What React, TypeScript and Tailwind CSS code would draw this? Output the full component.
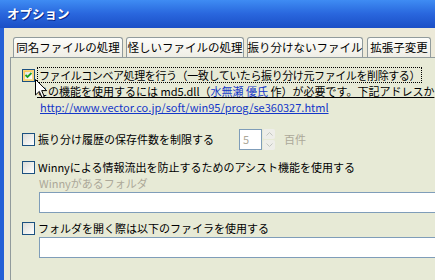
import React from "react";

const font = { fontFamily: "'Noto Sans CJK JP', 'Noto Sans', sans-serif" };

function CheckBox({ checked }: { checked?: boolean }) {
  if (checked) {
    return (
      <div className="w-[13px] h-[13px] shrink-0 border border-[#1C5180] bg-[#F9D57A] p-[1px]">
        <div className="w-full h-full bg-gradient-to-br from-[#F7C44F] to-[#FBE3A0] p-[1px]">
          <div className="w-full h-full bg-gradient-to-br from-[#E4E4DE] to-white flex items-center justify-center">
            <svg width="7" height="7" viewBox="0 0 7 7">
              <path d="M0.5 3 L2.5 5 L6.5 1" stroke="#21A121" strokeWidth="1.8" fill="none" />
            </svg>
          </div>
        </div>
      </div>
    );
  }
  return (
    <div className="w-[13px] h-[13px] shrink-0 border border-[#1C5180] bg-gradient-to-br from-[#DCDCD7] to-white" />
  );
}

function Tab({ label, w }: { label: string; w: string }) {
  return (
    <div
      className={`${w} h-[20px] border border-b-0 border-[#919B9C] rounded-t-[3px] bg-gradient-to-b from-[#FDFDFA] to-[#EFEEE6] flex items-center justify-center text-[11.5px] text-black whitespace-nowrap`}
    >
      {label}
    </div>
  );
}

export default function App() {
  return (
    <div className="w-[435px] h-[280px] overflow-hidden flex flex-col bg-[#ECE9D8] text-black" style={font}>
      {/* title bar */}
      <div className="h-[28px] shrink-0 bg-gradient-to-b from-[#3F8CF3] via-[#2966DD] to-[#1B4FC6] flex items-center pl-[7px]">
        <span className="text-white font-bold text-[12.5px] leading-none [text-shadow:1px_1px_0_#0A2A8A]">オプション</span>
      </div>
      {/* body */}
      <div className="flex-1 flex border-l-[4px] border-[#2761D6] min-h-0">
        <div className="flex-1 flex flex-col pl-[6px] pt-[9px] min-w-0">
          {/* tabs */}
          <div className="flex pl-[3px] h-[20px] shrink-0">
            <Tab label="同名ファイルの処理" w="w-[110px]" />
            <div className="w-[3px]" />
            <Tab label="怪しいファイルの処理" w="w-[118px]" />
            <div className="w-[3px]" />
            <Tab label="振り分けないファイル" w="w-[116px]" />
            <div className="w-[4px]" />
            <Tab label="拡張子変更" w="w-[64px]" />
          </div>
          {/* panel */}
          <div className="flex-1 relative border-l border-t border-[#919B9C] bg-[#E7EAD6] text-[11px] overflow-hidden min-w-0">
            <div className="flex flex-col">
              {/* row 1 */}
              <div className="mt-[9px] h-[16px] flex items-center pl-[11px]">
                <CheckBox checked />
                <div className="ml-[2px] h-[16px] border border-dotted border-black px-[1px] flex items-center whitespace-nowrap tracking-[-0.4px]">
                  ファイルコンベア処理を行う（一致していたら振り分け元ファイルを削除する）
                </div>
              </div>
              <div className="h-[16px] leading-[16px] pl-[26px] whitespace-nowrap underline">
                この機能を使用するには md5.dll（<span className="text-[#1437C8]">水無瀬 優氏</span> 作）が必要です。下記アドレスか
              </div>
              <div className="h-[16px] flex items-center pl-[29px] whitespace-nowrap">
                <span className="text-[#1437C8] underline">http://www.vector.co.jp/soft/win95/prog/se360327.html</span>
              </div>
              {/* row 2 */}
              <div className="mt-[14px] h-[21px] flex items-center pl-[11px]">
                <CheckBox />
                <span className="ml-[3px] w-[201px] whitespace-nowrap">振り分け履歴の保存件数を制限する</span>
                <div className="w-[23px] h-[21px] border border-[#7F9DB9] bg-white flex items-center pl-[3px] text-[#ACA899]">5</div>
                <div className="w-[12px] h-[21px] ml-[1px] flex flex-col gap-[1px]">
                  <div className="flex-1 bg-[#EEEEE9] rounded-[2px] flex items-center justify-center">
                    <svg width="7" height="4" viewBox="0 0 7 4"><path d="M0.5 3.5 L3.5 0.5 L6.5 3.5" stroke="#C3C6C0" fill="none" /></svg>
                  </div>
                  <div className="flex-1 bg-[#EEEEE9] rounded-[2px] flex items-center justify-center">
                    <svg width="7" height="4" viewBox="0 0 7 4"><path d="M0.5 0.5 L3.5 3.5 L6.5 0.5" stroke="#C3C6C0" fill="none" /></svg>
                  </div>
                </div>
                <span className="ml-[9px] text-[#ACA899]">百件</span>
              </div>
              {/* row 3 */}
              <div className="mt-[9px] h-[16px] flex items-center pl-[11px]">
                <CheckBox />
                <span className="ml-[3px] whitespace-nowrap">Winnyによる情報流出を防止するためのアシスト機能を使用する</span>
              </div>
              <div className="h-[16px] flex items-center pl-[28px] text-[#ACA899] whitespace-nowrap">Winnyがあるフォルダ</div>
              <div className="mt-[1px] ml-[28px] h-[21px] border border-[#7F9DB9] bg-white w-[420px]" />
              {/* row 4 */}
              <div className="mt-[7px] h-[16px] flex items-center pl-[11px]">
                <CheckBox />
                <span className="ml-[3px] whitespace-nowrap">フォルダを開く際は以下のファイラを使用する</span>
              </div>
              <div className="mt-[1px] ml-[28px] h-[21px] border border-[#7F9DB9] bg-white w-[420px]" />
            </div>
            {/* mouse cursor */}
            <svg className="absolute left-[24px] top-[21px]" width="13" height="20" viewBox="0 0 13 20">
              <path d="M0.5 0.5 L0.5 16 L4.3 12.4 L7 18.6 L9.3 17.6 L6.7 11.6 L11.7 11.6 Z" fill="white" stroke="black" strokeWidth="1" />
            </svg>
          </div>
        </div>
      </div>
    </div>
  );
}
